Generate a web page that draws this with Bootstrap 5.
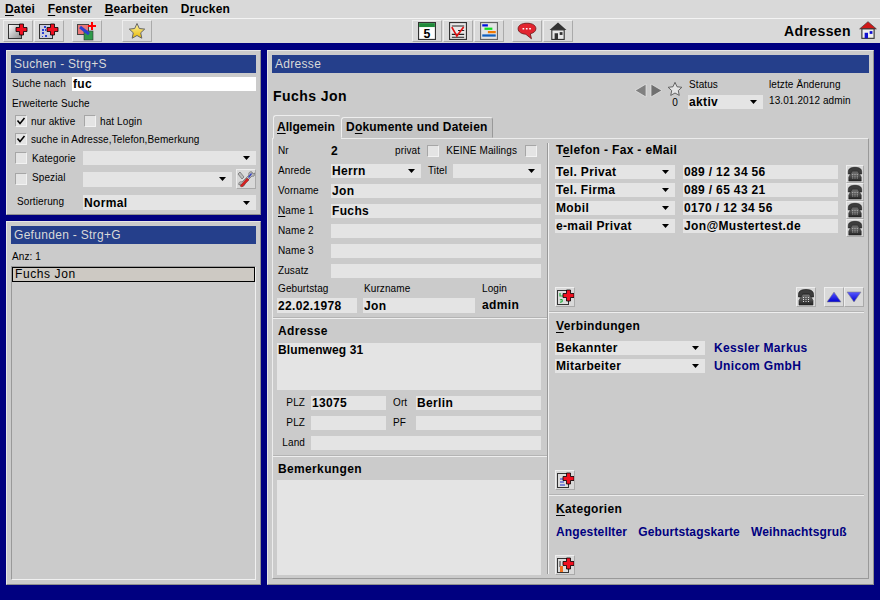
<!DOCTYPE html>
<html lang="de">
<head>
<meta charset="utf-8">
<title>Adressen</title>
<link href="https://cdn.jsdelivr.net/npm/bootstrap@5.3.0/dist/css/bootstrap.min.css" rel="stylesheet">
<style>
html,body{height:600px;overflow:hidden}
body{background:#000080;font-family:"Liberation Sans",Arial,sans-serif;font-size:10px;line-height:14px;color:#000;letter-spacing:.1px}
label{white-space:nowrap}
u{text-underline-offset:2px}
.defs{position:absolute;width:0;height:0}
.menubar{height:18px;background:#d9d9d9;padding-left:5px;gap:12.600px;font-size:12px;font-weight:700;line-height:16px;letter-spacing:.15px}
.toolbar{height:25px;background:#d9d9d9;border-top:1px solid #f4f4f4;padding:1px 3px 0;align-items:flex-start}
.tb{width:30px;height:22px;padding:0;border-radius:0;background:#d9d9d9;border:1px solid;border-color:#eee #aaa #aaa #eee;display:flex;align-items:center;justify-content:center;margin-right:1px}
.tb svg{display:block}
.g72{margin-left:7px}.g122{margin-left:19px}.g412{margin-left:259px}.g512{margin-left:7px}
.apptitle{margin-left:auto;font-size:14px;font-weight:700;line-height:22px;letter-spacing:.4px;color:#000}
.main{height:557px;padding:7px 6px 15px;gap:6px}
.panel{background:#cbcbcb;border:1px solid;border-color:#e6e6e6 #8f8f8f #8f8f8f #e6e6e6;padding:4px}
.lcol{width:255px;gap:6px}
.p1{height:165px}
.grow{flex:1 1 0;min-height:0}
.title{height:18px;background:#253f8b;color:#d9d9d9;font-size:12px;line-height:18px;padding-left:3px;letter-spacing:.3px;flex:none}
.rpanel{width:607px}
.r14{height:14px}.r15{height:15px}.r20{height:20px}
.fld,.fld:focus{height:14px;background-color:#e4e4e4;border:0;border-radius:0;padding:0 1px;font-size:12px;font-weight:700;line-height:13px;color:#000;box-shadow:none;letter-spacing:.35px;min-height:0;font-family:inherit}
.fh15,.fh15:focus{height:15px}
select.fld{padding:1px 14px 0 1px;background-image:url("data:image/svg+xml,%3Csvg xmlns='http://www.w3.org/2000/svg' width='7' height='4'%3E%3Cpath d='M0 0h7L3.500 4z' fill='%23000'/%3E%3C/svg%3E");background-repeat:no-repeat;background-position:right 6px center;background-size:7px 4px}
.white,.white:focus{background-color:#fff}
.ta,.ta:focus{resize:none;display:block;letter-spacing:.1px;padding-top:1px}
.cb.form-check-input{width:12px;height:12px;margin:0;flex:none;background-color:#e4e4e4;border:1px solid;border-color:#a6a6a6 #f2f2f2 #f2f2f2 #a6a6a6;border-radius:0;box-shadow:none}
.cb.form-check-input:checked[type=checkbox]{background-color:#e4e4e4;border-color:#a6a6a6 #f2f2f2 #f2f2f2 #a6a6a6;background-image:url("data:image/svg+xml,%3Csvg xmlns='http://www.w3.org/2000/svg' viewBox='0 0 10 10'%3E%3Cpath d='M1.500 4.500 4 7.500 8.500 2' fill='none' stroke='%23000' stroke-width='1.500'/%3E%3C/svg%3E");background-size:10px 10px}
.cb.form-check-input.g7{margin-left:7px}
.cb.form-check-input.g8{margin-left:8px}
.g7{margin-left:7px}
.w61{width:61px;padding-left:1px;flex:none}
.mt4{margin-top:4px}.mt5{margin-top:5px}.mt6{margin-top:6px}
.pl1{padding-left:1px}.pl4{padding-left:4px}.pl6{padding-left:6px}
.ml4{margin-left:4px}.ml5{margin-left:5px}
.w53{width:53px}
.dn{padding-top:2px}.dnb{padding-top:1px}.up{padding-bottom:2px}
.ksel{width:173px;flex:none}
.sicon{width:20px;height:20px;padding:0;border-radius:0;background:#d9d9d9;border:1px solid;border-color:#eee #aaa #aaa #eee;margin-left:4px;flex:none;display:flex;align-items:center;justify-content:center}
.sp{width:149px;flex:none}
.anz{height:14px;margin-top:6px;padding-left:1px}
.listbox{margin-top:2px;border:1px solid;border-color:#999 #f0f0f0 #f0f0f0 #999;height:314px}
.sel{height:15px;background:#cdc9c3;border:1px solid #000;font-size:12px;line-height:13px;padding-left:2px;letter-spacing:.6px;color:#000}
.head{height:42px}
.person{font-size:14px;font-weight:700;letter-spacing:.45px;color:#000;padding:15px 0 0 1px;line-height:16px}
.nav-g{margin-left:auto;padding-top:10px;width:33px;flex:none}
.nav-g svg{margin-right:3px}
.nav-s{width:16px;flex:none;text-align:center;line-height:11px;margin-top:8px}
.nav-s svg{display:block}
.stat{width:75px;margin-left:5px;flex:none;padding-top:5px}
.stat label{padding-left:1px;margin-bottom:3px;display:block;height:14px}
.last{width:100px;margin-left:6px;flex:none;padding-top:5px}
.last div+div{margin-top:2px}
.tabs{height:23px;padding-left:1px;align-items:flex-end}
.tabs .nav-link{border-radius:3px 3px 0 0;border:1px solid;border-color:#eee #999 transparent #eee;background:#c4c4c4;color:#000;font-size:12px;font-weight:700;line-height:14px;padding:2px 4px 0;height:21px;letter-spacing:.2px;white-space:nowrap}
.tabs .nav-link.active{height:24px;background:#cbcbcb;width:68px;padding:4px 3px 0;margin-bottom:-1px;position:relative;z-index:1;border-color:#eee #cbcbcb #cbcbcb #eee;letter-spacing:.05px}
.tabs .dok{width:152px}
.frame{height:441px;border:1px solid;border-color:#ececec #999 #999 #ececec}
.fl{width:274px;flex:none}
.vsep{width:2px;flex:none;margin:4px 0;border-left:1px solid #999;background:#f0f0f0}
.fr{flex:1 1 0}
.top-sec{height:178px;padding:5px 6px 0 4px}
.lb{width:54px;flex:none;padding-left:1px}
.stack{display:flex;flex-direction:column;gap:6px}
.hsep{height:2px;border-top:1px solid #b4b4b4;background:#eee;flex:none}
.hs-r{margin-right:4px}
.sec-h{font-size:12px;font-weight:700;letter-spacing:.35px;height:14px;line-height:14px;color:#000;padding-left:1px}
.adr{padding:5px 6px 0 4px;height:136px}
.ta1,.ta1:focus{height:47px;margin-top:5px}
.plzl{width:28px;text-align:right;flex:none;margin-right:6px}
.w75{width:75px;flex:none}
.ortl{width:30px;flex:none;padding-left:7px}
.w125{width:125px;flex:none}
.note{padding:5px 6px 0 4px}
.ta2,.ta2:focus{height:95px;margin-top:4px}
.p-tel{height:172px;padding:4px 4px 0 6px}
.trow{height:18px}
.tsel{width:120px;flex:none}
.tinp{width:155px;flex:none;margin-left:8px}
.ph{width:18px;height:18px;margin-left:8px;padding:0;border-radius:0;background:#d9d9d9;border:1px solid;border-color:#eee #aaa #aaa #eee;display:flex;align-items:center;justify-content:center;flex:none}
.ab{width:20px;height:20px;padding:0;border-radius:0;background:#d9d9d9;border:1px solid;border-color:#eee #aaa #aaa #eee;display:flex;align-items:center;justify-content:center;flex:none}
.tlist{margin-top:8px;height:72px}
.tfoot{margin-top:50px}
.gap8{margin-left:8px}
.p-ver{height:181px;padding:6px 4px 0 6px}
.vrow{height:18px}
.vsel{width:150px;flex:none}
.lnk{color:#000080;font-size:12px;font-weight:700;letter-spacing:.35px;text-decoration:none;margin-left:9px;line-height:14px}
.vlist{margin-top:8px;height:129px}
.p-kat{padding:6px 4px 0 6px}
.klinks{margin-top:9px;height:14px;gap:11px;padding-left:1px}
.klinks .lnk{margin:0;letter-spacing:.15px}
.kadd{margin-top:16px}
.fs12b{font-size:12px}
.w90{width:90px;flex:none}.w88{width:88px;flex:none}
.titl{width:32px;padding-left:7px;flex:none}
.bgrid{margin-top:4px}
.bg1{width:80px;flex:none;margin-right:6px}.bg2{width:112px;flex:none;margin-right:7px}
.ps1{padding-left:1px;height:16px}
.bg3 div:first-child{height:16px}
.adm{font-size:12px;font-weight:700;letter-spacing:.35px;line-height:15px}
.me4{margin-right:4px}
</style>
</head>
<body>
<svg class="defs" xmlns="http://www.w3.org/2000/svg" aria-hidden="true">
<defs>
<linearGradient id="dg" x1="0" y1="0" x2="1" y2="1"><stop offset="0" stop-color="#fff"/><stop offset="1" stop-color="#8a8a8a"/></linearGradient>
<linearGradient id="pg" x1="0" y1="0" x2="0" y2="1"><stop offset="0" stop-color="#777"/><stop offset="1" stop-color="#222"/></linearGradient>
<linearGradient id="sg" x1="0" y1="0" x2="0" y2="1"><stop offset="0" stop-color="#fff6a8"/><stop offset="1" stop-color="#e8b800"/></linearGradient>
<linearGradient id="bl" x1="0" y1="0" x2="0" y2="1"><stop offset="0" stop-color="#5a5aff"/><stop offset="1" stop-color="#0000d0"/></linearGradient>
<g id="cross"><path d="M3.500 0h4v3.500H11v4H7.500V11h-4V7.500H0v-4h3.500z" fill="#f01020" stroke="#000" stroke-width=".8"/></g>
<symbol id="phone" viewBox="0 0 18 18"><path d="M1.500 6.500C1.500 2.500 5 1.500 9 1.500s7.500 1 7.500 5v2.500h-4V6h-7v3h-4z" fill="#3c3c3c" stroke="#111" stroke-width=".6"/><path d="M5.500 6.500h7l3.500 6V17H2v-4.500z" fill="url(#pg)" stroke="#222" stroke-width=".6"/><path d="M6 9.500h1M8.500 9.500h1M11 9.500h1M6 11.500h1M8.500 11.500h1M11 11.500h1M6 13.500h1M8.500 13.500h1M11 13.500h1" stroke="#ddd" stroke-width="1"/></symbol>
<symbol id="star" viewBox="0 0 18 18"><path d="M9 1.500l2.300 5 5.400.6-4 3.700 1.100 5.400L9 13.500l-4.800 2.700 1.100-5.400-4-3.700 5.400-.6z" fill="url(#sg)" stroke="#666" stroke-width="1"/></symbol>
<symbol id="ostar" viewBox="0 0 18 18"><path d="M9 1.500l2.300 5 5.400.6-4 3.700 1.100 5.400L9 13.500l-4.800 2.700 1.100-5.400-4-3.700 5.400-.6z" fill="#e4e4e4" stroke="#555" stroke-width="1"/></symbol>
</defs>
</svg>

<nav class="menubar d-flex align-items-center">
  <span><u>D</u>atei</span><span><u>F</u>enster</span><span><u>B</u>earbeiten</span><span>D<u>r</u>ucken</span>
</nav>

<div class="toolbar d-flex">
  <button class="btn tb" type="button" aria-label="Neu"><svg width="24" height="20" viewBox="0 0 24 20"><rect x="2.500" y="3.500" width="13" height="14" fill="url(#dg)" stroke="#333"/><use href="#cross" x="10" y="3"/></svg></button>
  <button class="btn tb" type="button" aria-label="Neu aus Liste"><svg width="24" height="20" viewBox="0 0 24 20"><rect x="2.500" y="3.500" width="13" height="14" fill="#ccd" stroke="#333"/><path d="M7 5h2v2H7zM5 8h2v2H5zM8 8h1v2H8zM5 11h2v2H5zM8 14h2v2H8zM5 15h1v1H5z" fill="#2a3fd0"/><use href="#cross" x="10" y="3"/></svg></button>
  <button class="btn tb g72" type="button" aria-label="Bearbeiten"><svg width="24" height="20" viewBox="0 0 24 20"><rect x="2.500" y="3.500" width="11" height="10" fill="#e87878" stroke="#444"/><rect x="9" y="10" width="9" height="9" fill="#2f9a4a" stroke="#333" stroke-width=".6"/><path d="M5 6l9 7" stroke="#2a3fd0" stroke-width="3"/><path d="M16 1h2v3h3v2h-3v3h-2V6h-3V4h3z" fill="#f00"/></svg></button>
  <button class="btn tb g122" type="button" aria-label="Favorit"><svg width="18" height="18"><use href="#star"/></svg></button>
  <button class="btn tb g412" type="button" aria-label="Kalender"><svg width="18" height="18" viewBox="0 0 16 16"><rect x=".5" y=".5" width="15" height="15" fill="#fff" stroke="#333"/><rect x="1" y="1" width="14" height="3.500" fill="#1f8a3a"/><text x="8" y="14" font-family="Liberation Sans" font-size="11" font-weight="700" text-anchor="middle" fill="#000">5</text></svg></button>
  <button class="btn tb" type="button" aria-label="Aufgaben"><svg width="18" height="18" viewBox="0 0 16 16"><rect x=".5" y=".5" width="15" height="15" fill="#e8e8e8" stroke="#333"/><path d="M2.500 3.500h11M8 7.500h5.500M2.500 11h11M2.500 13.500h11" stroke="#222"/><path d="M2.500 4.500l4.500 8 6-8" fill="none" stroke="#e01010" stroke-width="1.500"/></svg></button>
  <button class="btn tb" type="button" aria-label="Projekte"><svg width="18" height="18" viewBox="0 0 16 16"><rect x=".5" y=".5" width="15" height="15" fill="#e4e4e4" stroke="#666"/><rect x="2" y="2" width="5" height="2" fill="#0010e0"/><rect x="4" y="5" width="7" height="2" fill="#10e020"/><rect x="7" y="8" width="7" height="2" fill="#f07800"/><rect x="2" y="11" width="12" height="2" fill="#1060c0"/></svg></button>
  <button class="btn tb g512" type="button" aria-label="Nachrichten"><svg width="20" height="18" viewBox="0 0 18 16"><path d="M9 1C4 1 1 3 1 6s3 4.500 7 5l5 4-1-4.500c3-.8 5-2.200 5-4.500C17 3 14 1 9 1z" fill="#e22530" stroke="#611" stroke-width=".7"/><path d="M5 6h1.500M8 6h1.500M11 6h1.500" stroke="#fff" stroke-width="1.500"/></svg></button>
  <button class="btn tb" type="button" aria-label="Start"><svg width="18" height="18" viewBox="0 0 16 16"><path d="M8 .5L15.500 7H.5z" fill="#333"/><rect x="2.500" y="7" width="11" height="8.500" fill="#e8e8e8" stroke="#333"/><rect x="5" y="10" width="3" height="5.500" fill="#333"/><rect x="9.500" y="9" width="2.500" height="2.500" fill="#333"/></svg></button>
  <div class="apptitle">Adressen</div>
  <svg class="ms-2" width="18" height="20" viewBox="0 0 16 18"><path d="M8 1.500L15.500 8H.5z" fill="#d01818" stroke="#333" stroke-width=".6"/><rect x="2.500" y="8" width="11" height="8.500" fill="#eee" stroke="#333"/><rect x="5" y="11.500" width="3" height="5" fill="#1010d0"/><rect x="9.500" y="10" width="2.500" height="2.500" fill="#1010d0"/></svg>
</div>

<main class="main d-flex">
  <div class="lcol d-flex flex-column">
    <section class="panel p1">
      <div class="title">Suchen - Strg+S</div>
      <div class="d-flex align-items-center r14 mt4"><label class="w61">Suche nach</label><input class="form-control fld white" value="fuc"></div>
      <div class="r14 mt5 pl1 dnb">Erweiterte Suche</div>
      <div class="d-flex align-items-center r14 mt4 pl4"><input class="form-check-input cb" type="checkbox" checked><label class="ml4 w53 dn">nur aktive</label><input class="form-check-input cb" type="checkbox"><label class="ml4 dn">hat Login</label></div>
      <div class="d-flex align-items-center r14 mt4 pl4"><input class="form-check-input cb" type="checkbox" checked><label class="ml4 dn">suche in Adresse,Telefon,Bemerkung</label></div>
      <div class="d-flex align-items-center r14 mt5"><div class="d-flex align-items-center flex-fill pl4"><input class="form-check-input cb" type="checkbox"><label class="ml5 dn">Kategorie</label></div><select class="form-select fld ksel"><option></option></select></div>
      <div class="d-flex align-items-center r20 mt4"><div class="d-flex align-items-center flex-fill pl4"><input class="form-check-input cb" type="checkbox"><label class="ml5 up">Spezial</label></div><select class="form-select fld fh15 sp"><option></option></select><button class="btn sicon" type="button" aria-label="Werkzeug"><svg width="18" height="18" viewBox="0 0 18 18"><path d="M3 2l4 5-2 2-4-5zM15 2c-2-1-4 1-3 3l-7 7c-2-1-4 1-3 3l2-1 1 2c2 1 3-1 3-3l7-7c2 1 3-1 3-3l-2 1z" fill="#bbb" stroke="#555" stroke-width=".6"/><path d="M3 16l7-8 2 2-7 7z" fill="#d82020" stroke="#611" stroke-width=".4"/><path d="M11 7l3-4 1 1-3 4z" fill="#3040c0"/></svg></button></div>
      <div class="d-flex align-items-center r15 mt6"><label class="flex-fill pl6 up">Sortierung</label><select class="form-select fld fh15 ksel"><option>Normal</option></select></div>
    </section>
    <section class="panel grow">
      <div class="title">Gefunden - Strg+G</div>
      <div class="anz">Anz: 1</div>
      <div class="listbox"><div class="sel">Fuchs Jon</div></div>
    </section>
  </div>

  <section class="panel rpanel">
    <div class="title">Adresse</div>
    <div class="head d-flex">
      <div class="person">Fuchs Jon</div>
      <div class="nav-g d-flex">
        <svg width="13" height="15" viewBox="0 0 13 15"><path d="M12 1v13L1 7.500z" fill="#808080" stroke="#e8e8e8" stroke-width=".7"/></svg>
        <svg width="13" height="15" viewBox="0 0 13 15"><path d="M1 1v13l11-6.500z" fill="#707070" stroke="#e8e8e8" stroke-width=".7"/></svg>
      </div>
      <div class="nav-s"><svg width="16" height="16"><use href="#ostar"/></svg><div>0</div></div>
      <div class="stat"><label>Status</label><select class="form-select fld"><option>aktiv</option></select></div>
      <div class="last"><div>letzte Änderung</div><div>13.01.2012 admin</div></div>
    </div>
    <ul class="nav tabs d-flex">
      <li class="nav-item"><a class="nav-link active" href="#"><u>A</u>llgemein</a></li>
      <li class="nav-item"><a class="nav-link dok" href="#">D<u>o</u>kumente und Dateien</a></li>
    </ul>
    <div class="frame d-flex">
      <div class="fl d-flex flex-column">
        <div class="top-sec">
          <div class="stack">
            <div class="d-flex align-items-center r14"><span class="lb">Nr</span><b class="fs12b">2</b><span class="ms-auto d-flex align-items-center me4"><span>privat</span><input class="form-check-input cb g7" type="checkbox"><span class="g7">KEINE Mailings</span><input class="form-check-input cb g8" type="checkbox"></span></div>
            <div class="d-flex align-items-center r14"><span class="lb">Anrede</span><select class="form-select fld w90"><option>Herrn</option></select><span class="titl">Titel</span><select class="form-select fld w88"><option></option></select></div>
            <div class="d-flex align-items-center r14"><span class="lb">Vorname</span><input class="form-control fld" value="Jon"></div>
            <div class="d-flex align-items-center r14"><span class="lb"><u>N</u>ame 1</span><input class="form-control fld" value="Fuchs"></div>
            <div class="d-flex align-items-center r14"><span class="lb">Name 2</span><input class="form-control fld"></div>
            <div class="d-flex align-items-center r14"><span class="lb">Name 3</span><input class="form-control fld"></div>
            <div class="d-flex align-items-center r14"><span class="lb">Zusatz</span><input class="form-control fld"></div>
          </div>
          <div class="d-flex bgrid">
            <div class="bg1"><div class="ps1">Geburtstag</div><input class="form-control fld fh15" value="22.02.1978"></div>
            <div class="bg2"><div class="ps1">Kurzname</div><input class="form-control fld fh15" value="Jon"></div>
            <div class="bg3"><div>Login</div><div class="adm">admin</div></div>
          </div>
        </div>
        <div class="hsep"></div>
        <div class="adr">
          <div class="sec-h">Adresse</div>
          <textarea class="form-control fld ta ta1">Blumenweg 31</textarea>
          <div class="stack mt6">
            <div class="d-flex align-items-center r14"><span class="plzl">PLZ</span><input class="form-control fld w75" value="13075"><span class="ortl">Ort</span><input class="form-control fld w125" value="Berlin"></div>
            <div class="d-flex align-items-center r14"><span class="plzl">PLZ</span><input class="form-control fld w75"><span class="ortl">PF</span><input class="form-control fld w125"></div>
            <div class="d-flex align-items-center r14"><span class="plzl">Land</span><input class="form-control fld"></div>
          </div>
        </div>
        <div class="hsep"></div>
        <div class="note">
          <div class="sec-h">Bemerkungen</div>
          <textarea class="form-control fld ta ta2"></textarea>
        </div>
      </div>
      <div class="vsep"></div>
      <div class="fr d-flex flex-column">
        <div class="p-tel">
          <div class="sec-h"><span>T<u>e</u>lefon - Fax - eMail</span></div>
          <div class="tlist">
            <div class="trow d-flex align-items-start"><select class="form-select fld tsel"><option>Tel. Privat</option></select><input class="form-control fld tinp" value="089 / 12 34 56"><button class="btn ph" type="button" aria-label="Wählen"><svg width="16" height="16"><use href="#phone"/></svg></button></div>
            <div class="trow d-flex align-items-start"><select class="form-select fld tsel"><option>Tel. Firma</option></select><input class="form-control fld tinp" value="089 / 65 43 21"><button class="btn ph" type="button" aria-label="Wählen"><svg width="16" height="16"><use href="#phone"/></svg></button></div>
            <div class="trow d-flex align-items-start"><select class="form-select fld tsel"><option>Mobil</option></select><input class="form-control fld tinp" value="0170 / 12 34 56"><button class="btn ph" type="button" aria-label="Wählen"><svg width="16" height="16"><use href="#phone"/></svg></button></div>
            <div class="trow d-flex align-items-start"><select class="form-select fld tsel"><option>e-mail Privat</option></select><input class="form-control fld tinp" value="Jon@Mustertest.de"><button class="btn ph" type="button" aria-label="Wählen"><svg width="16" height="16"><use href="#phone"/></svg></button></div>
          </div>
          <div class="d-flex tfoot">
            <button class="btn ab" type="button" aria-label="Neu"><svg width="18" height="18" viewBox="0 0 18 18"><rect x="1.500" y="2.500" width="11" height="14" fill="#ddd" stroke="#333"/><path d="M4 5v3h3M4 12c3-2 3 3 0 2" fill="none" stroke="#20b040" stroke-width="1.200"/><use href="#cross" x="7" y="2"/></svg></button>
            <button class="btn ab ms-auto" type="button" aria-label="Wählen"><svg width="18" height="18"><use href="#phone"/></svg></button>
            <button class="btn ab gap8" type="button" aria-label="Hoch"><svg width="16" height="12" viewBox="0 0 16 12"><path d="M8 1l7 10H1z" fill="url(#bl)" stroke="#888" stroke-width=".6"/></svg></button>
            <button class="btn ab" type="button" aria-label="Runter"><svg width="16" height="12" viewBox="0 0 16 12"><path d="M8 11L15 1H1z" fill="url(#bl)" stroke="#888" stroke-width=".6"/></svg></button>
          </div>
        </div>
        <div class="hsep hs-r"></div>
        <div class="p-ver">
          <div class="sec-h"><u>V</u>erbindungen</div>
          <div class="vlist">
            <div class="vrow d-flex align-items-start"><select class="form-select fld vsel"><option>Bekannter</option></select><a class="lnk" href="#">Kessler Markus</a></div>
            <div class="vrow d-flex align-items-start"><select class="form-select fld vsel"><option>Mitarbeiter</option></select><a class="lnk" href="#">Unicom GmbH</a></div>
          </div>
          <button class="btn ab" type="button" aria-label="Neu"><svg width="18" height="18" viewBox="0 0 18 18"><rect x="1.500" y="2.500" width="11" height="14" fill="#ddd" stroke="#333"/><path d="M4 8h4M4 11h4M4 14h5" stroke="#2030d0"/><use href="#cross" x="7" y="2"/></svg></button>
        </div>
        <div class="hsep hs-r"></div>
        <div class="p-kat">
          <div class="sec-h"><u>K</u>ategorien</div>
          <div class="klinks d-flex"><a class="lnk" href="#">Angestellter</a><a class="lnk" href="#">Geburtstagskarte</a><a class="lnk" href="#">Weihnachtsgruß</a></div>
          <button class="btn ab kadd" type="button" aria-label="Neu"><svg width="18" height="18" viewBox="0 0 18 18"><rect x="1.500" y="2.500" width="11" height="14" fill="#ddd" stroke="#333"/><path d="M4 5v6" stroke="#333"/><path d="M4 10h3v6H4z" fill="#f07020"/><use href="#cross" x="7" y="2"/></svg></button>
        </div>
      </div>
    </div>
  </section>
</main>
<script src="https://cdn.jsdelivr.net/npm/bootstrap@5.3.0/dist/js/bootstrap.bundle.min.js"></script>
</body>
</html>
